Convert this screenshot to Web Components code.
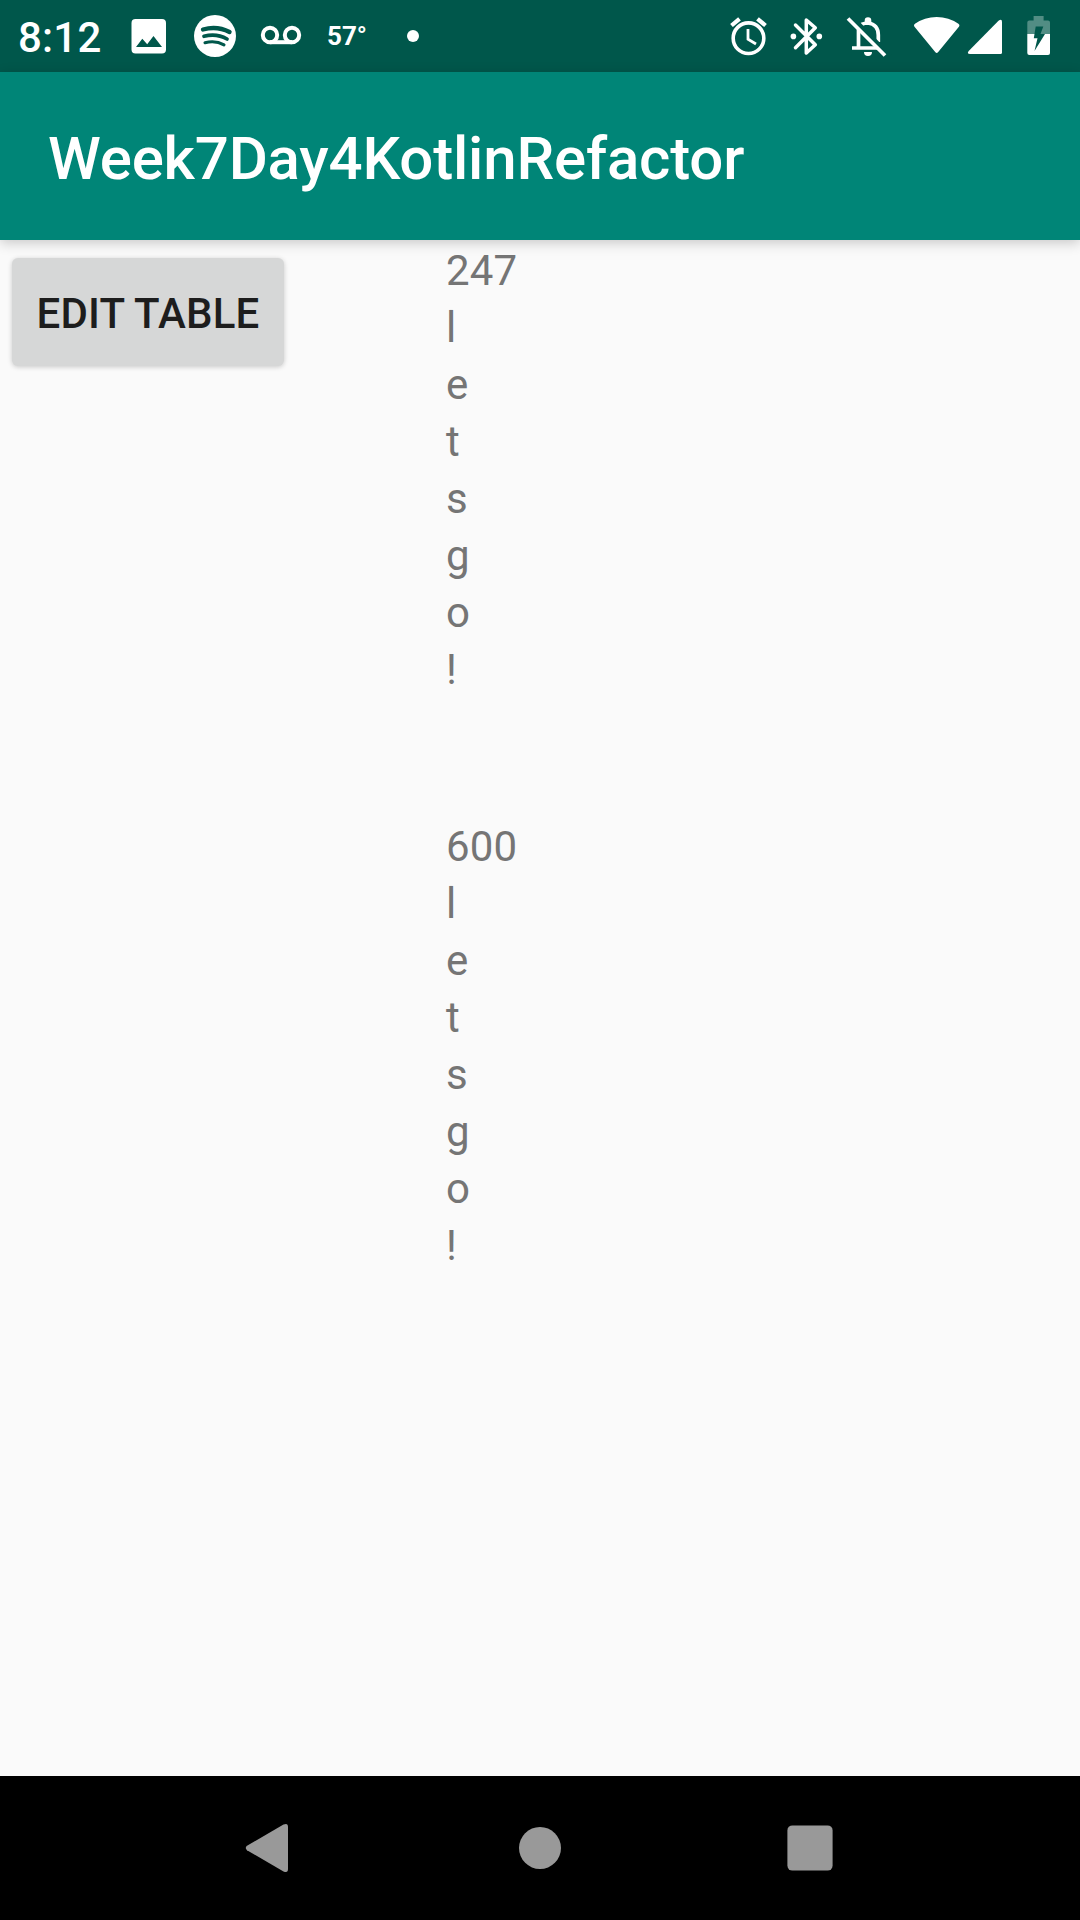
<!DOCTYPE html>
<html lang="en"><head><meta charset="utf-8"><title>Week7Day4KotlinRefactor</title>
<style>html,body{margin:0;padding:0}body{width:1080px;height:1920px;overflow:hidden;font-family:Roboto,sans-serif}</style></head>
<body><phone-screen></phone-screen>
<script>
const define=(name,html)=>customElements.define(name,class extends HTMLElement{
  constructor(){super();this.attachShadow({mode:'open'}).innerHTML=html;}
});
define('status-bar',`<style>
:host{display:flex;height:72px;background:#00574b;color:#fff;justify-content:space-between;box-sizing:border-box;padding:0 24px 0 18px;flex:none}
div{display:flex}svg{height:72px;display:block;flex:none}
.clock{font-size:42px;font-weight:500;line-height:75px;width:112px;white-space:nowrap;letter-spacing:.2px}
.temp{font-size:26px;font-weight:700;line-height:72px;width:79px;padding-left:1px;white-space:nowrap}
</style>
<div><span class="clock">8:12</span>
<svg width="60" viewBox="130 0 60 72"><path fill="#fff" fill-rule="evenodd" d="M135.500 19H162q4 0 4 4V49.500q0 4-4 4H135.500q-4 0-4-4V23q0-4 4-4zM136 47H162L153.500 36L147.200 44.200L142.300 38.700z"/></svg>
<svg width="60" viewBox="190 0 60 72"><circle cx="215" cy="36" r="21" fill="#fff"/><g fill="none" stroke="#00574b" stroke-linecap="round"><path stroke-width="4.400" d="M203 29.500Q217 25.500 229.500 32"/><path stroke-width="3.700" d="M204 36.300Q216.500 33 227 39"/><path stroke-width="3.100" d="M205 42.700Q215.500 40 224 44.800"/></g></svg>
<svg width="76" viewBox="250 0 76 72"><g fill="none" stroke="#fff" stroke-width="4"><circle cx="270" cy="35" r="7.200"/><circle cx="292" cy="35" r="7.200"/><path d="M270 42.200H292"/></g></svg>
<span class="temp">57°</span>
<svg width="14" viewBox="406 0 14 72"><circle cx="413" cy="36" r="6" fill="#fff"/></svg></div>
<div>
<svg width="60" viewBox="730 0 60 72"><g fill="none" stroke="#fff" stroke-width="3.600"><circle cx="748.500" cy="38.200" r="15.300"/><path stroke-width="4.200" d="M731.500 25.500L739.500 18.800M765.500 25.500L757.500 18.800"/><path stroke-width="2.800" d="M748 29V39.300L756 44"/></g></svg>
<svg width="56" viewBox="790 0 56 72"><path fill="none" stroke="#fff" stroke-width="3.500" stroke-linecap="round" stroke-linejoin="round" d="M795.500 25L815.300 44.800L806.300 53V20L815.300 27.800L795.500 47.700"/><g fill="#fff"><circle cx="793.400" cy="36.400" r="2.800"/><circle cx="819.300" cy="36.400" r="2.800"/></g></svg>
<svg width="64" viewBox="846 0 64 72"><g fill="none" stroke="#fff" stroke-width="3.700"><path d="M858.500 29.500V48M852 48H879M861.500 24.500Q864.500 23 868 23Q878.300 24.500 878.300 35V42"/></g><path fill="#fff" d="M864.700 23V20.500a3.300 3.300 0 0 1 6.600 0V23zM864 52H872a4 4 0 0 1-8 0z"/><path stroke="#00574b" stroke-width="4" d="M852 17L890 56"/><path stroke="#fff" stroke-width="3.800" d="M848 18.500L885 55.500"/></svg>
<svg width="56" viewBox="910 0 56 72"><path fill="#fff" d="M914.300 26.600Q913.200 25 915 23.800Q924.500 17 936.700 17T958.400 23.800Q960.200 25 959.100 26.600L938 52.300Q936.700 53.700 935.400 52.300z"/></svg>
<svg width="60" viewBox="966 0 60 72"><path fill="#fff" d="M998.500 20.700Q1002 18.500 1002 22V52.500Q1002 54 1000.500 54H970Q966.500 54 968.700 51z"/></svg>
<svg width="30" viewBox="1026 0 30 72"><path fill="#fff" opacity=".32" d="M1027.300 34V22.500q0-2 2-2H1033.600V16H1043.600V20.500H1048q2 0 2 2V34z"/><path fill="#fff" d="M1027.300 34H1050V53q0 2-2 2H1029.300q-2 0-2-2z"/><path fill="#00574b" d="M1035.700 26.500H1043.300L1040.500 34H1045L1034.500 51L1037.500 38.300H1033.800z"/></svg></div>`);
define('app-bar',`<style>:host{display:flex;flex:none;align-items:center;height:168px;box-sizing:border-box;padding:6px 48px 0;background:#008577;color:#fff;font-size:60px;font-weight:500;line-height:70px;letter-spacing:-.19px;position:relative;z-index:1;box-shadow:0 3px 12px rgba(0,0,0,.2)}</style><slot></slot>`);
define('raised-button',`<style>:host{display:block}button{display:block;border:0;margin:0;width:272px;height:107.500px;border-radius:6px;background:#d6d7d7;color:#1d1d1d;font:500 42px/49px Roboto,sans-serif;letter-spacing:.2px;padding:3px 0 0;white-space:nowrap;box-shadow:0 1px 5px rgba(0,0,0,.2)}</style><button><slot></slot></button>`);
define('text-view',`<style>:host{display:block;white-space:pre;font-size:42px;line-height:57px;letter-spacing:.2px;color:#757575}</style><slot></slot>`);
define('nav-bar',`<style>:host{display:flex;flex:none;height:144px;background:#000;justify-content:center;align-items:center}svg{display:block}div{width:270px;display:flex;justify-content:center}</style>
<div><svg width="60" height="60" viewBox="240 1818 60 60"><path fill="#999" d="M247 1850.200Q244.500 1848 247 1845.800L283.500 1824.600Q288 1822.500 288 1827V1869Q288 1873.500 283.500 1871.400z"/></svg></div>
<div><svg width="60" height="60" viewBox="0 0 60 60"><circle cx="30" cy="30" r="21" fill="#999"/></svg></div>
<div><svg width="60" height="60" viewBox="780 1818 60 60"><rect x="787.400" y="1825.400" width="45.200" height="45.200" rx="5" fill="#999"/></svg></div>`);
define('phone-screen',`<style>:host{display:flex;flex-direction:column;width:1080px;height:1920px;background:#fafafa}
main{flex:1;display:flex;align-items:flex-start;padding:0 0 0 12px;min-height:0}
raised-button{padding-top:18px;width:434px;flex:none}
section{display:flex;flex-direction:column;gap:120px;padding-top:2px}</style>
<status-bar></status-bar><app-bar>Week7Day4KotlinRefactor</app-bar>
<main><raised-button>EDIT TABLE</raised-button><section><text-view>247
l
e
t
s
g
o
!</text-view><text-view>600
l
e
t
s
g
o
!</text-view></section></main><nav-bar></nav-bar>`);
</script></body></html>
